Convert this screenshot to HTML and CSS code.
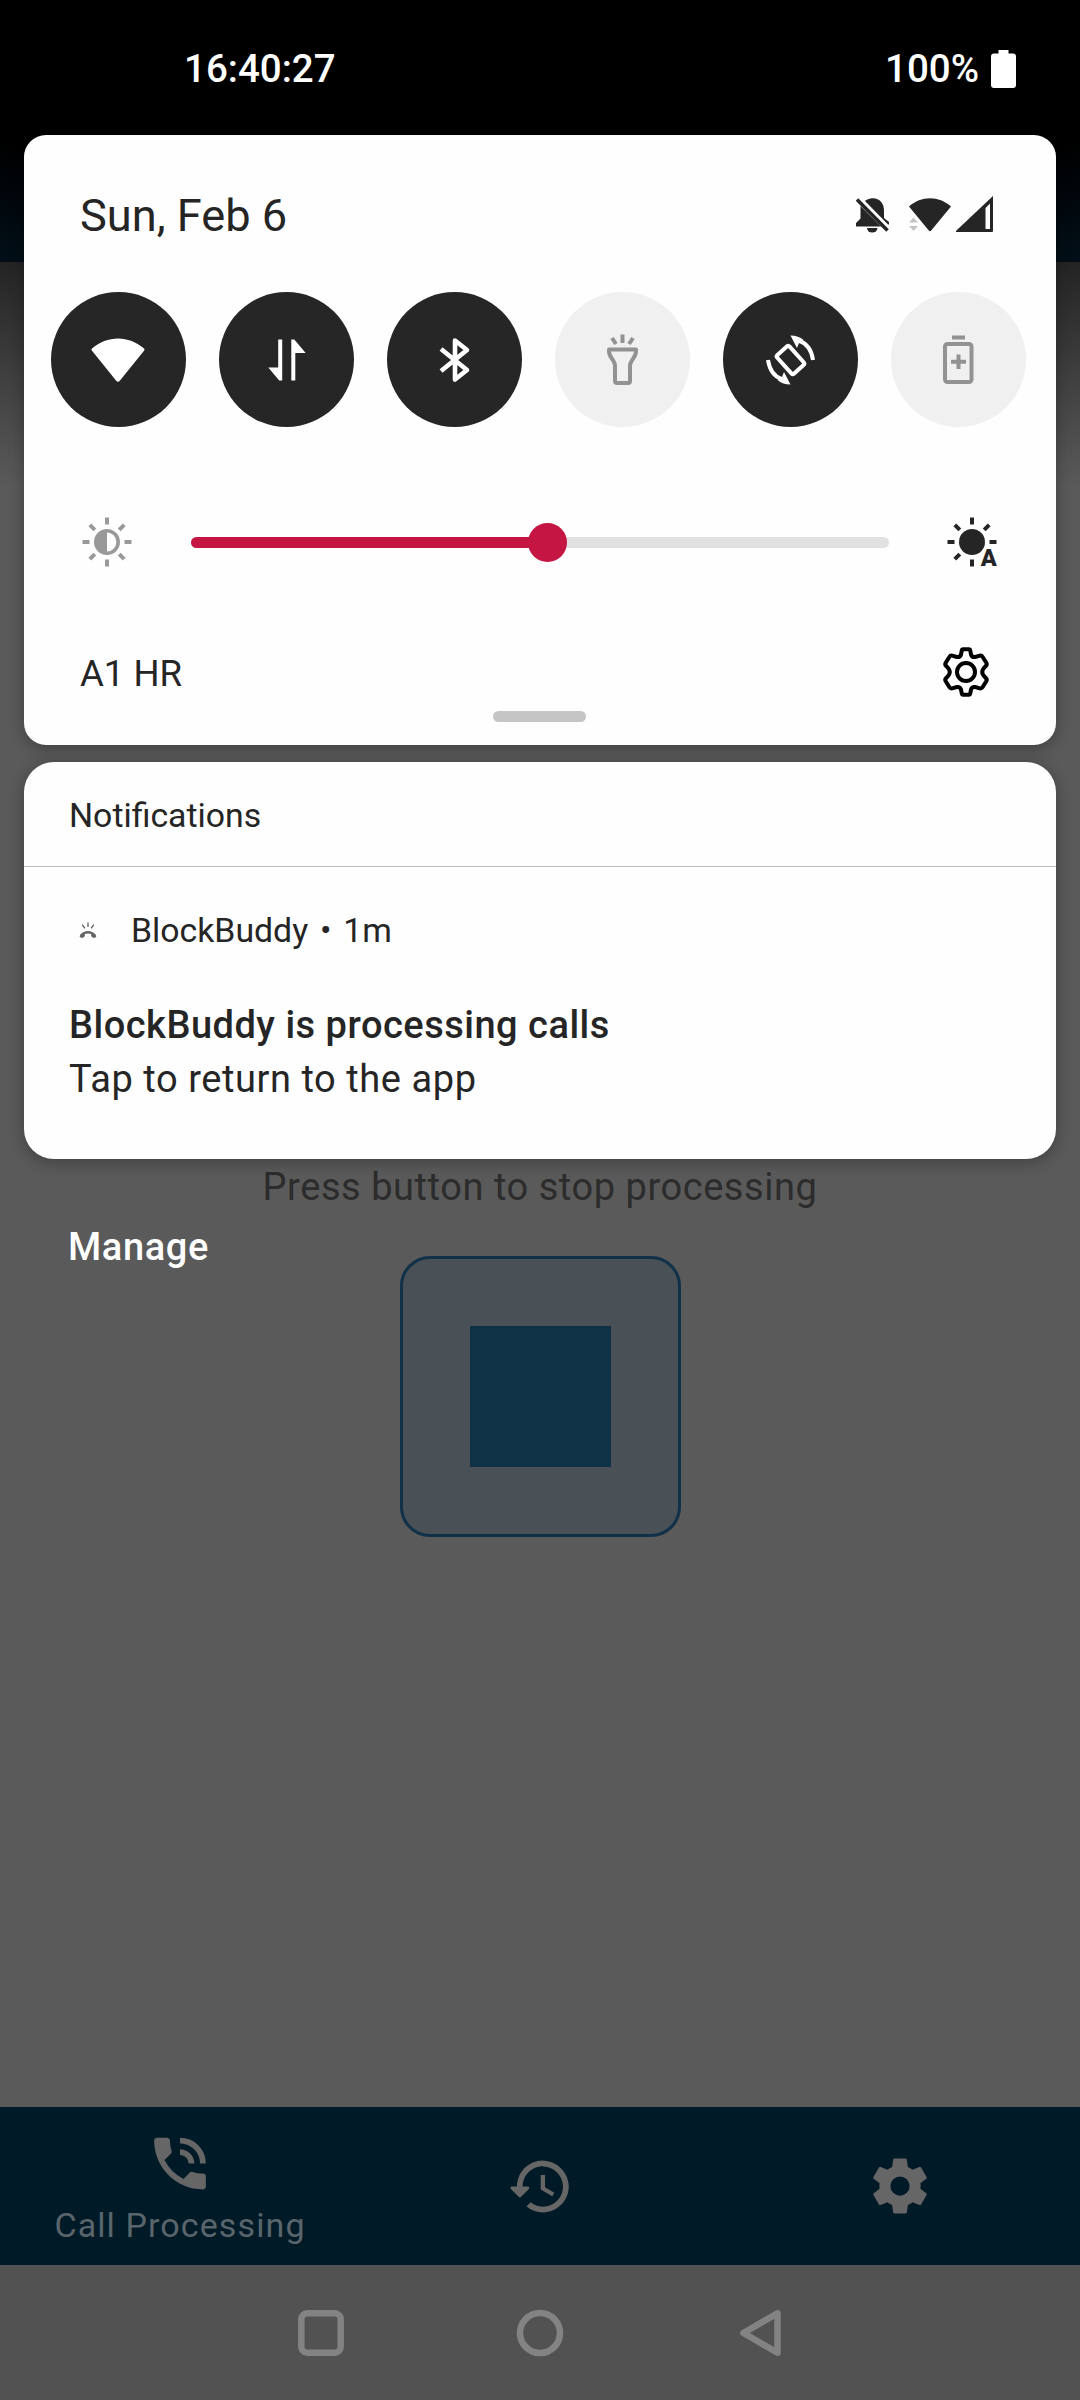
FILE: index.html
```html
<!DOCTYPE html>
<html lang="en">
<head>
<meta charset="utf-8">
<title>Notification shade</title>
<link rel="stylesheet" href="styles.css">
</head>
<body>
<div class="screen">
  <div class="app">
    <div class="toolbar"></div>
    <main class="content">
      <p class="hint">Press button to stop processing</p>
      <div class="stop"><div class="stop-mark"></div></div>
    </main>
    <nav class="tabs">
      <div class="tab">
        <svg class="tab-icon" viewBox="0 0 24 24"><path d="M20 15.5c-1.25 0-2.45-.2-3.57-.57a1.02 1.02 0 0 0-1.02.24l-2.2 2.2a15.045 15.045 0 0 1-6.59-6.59l2.2-2.21a.96.96 0 0 0 .25-1A11.36 11.36 0 0 1 8.5 4c0-.55-.45-1-1-1H4c-.55 0-1 .45-1 1 0 9.39 7.61 17 17 17 .55 0 1-.45 1-1v-3.5c0-.55-.45-1-1-1zM19 12h2a9 9 0 0 0-9-9v2c3.87 0 7 3.13 7 7zm-4 0h2c0-2.76-2.24-5-5-5v2c1.66 0 3 1.34 3 3z"/></svg>
        <span class="tab-label">Call Processing</span>
      </div>
      <div class="tab">
        <svg class="tab-icon" viewBox="0 0 24 24"><path d="M13.26 3C8.17 2.86 4 6.95 4 12H2.21c-.45 0-.67.54-.35.85l2.79 2.8c.2.2.51.2.71 0l2.79-2.8c.31-.31.09-.85-.36-.85H6c0-3.9 3.18-7.05 7.1-7 3.72.05 6.85 3.18 6.9 6.9.05 3.91-3.1 7.1-7 7.1-1.61 0-3.1-.55-4.28-1.48l-1.42 1.44C8.86 20.23 10.85 21 13 21c5.05 0 9.14-4.17 9-9.26-.13-4.69-4.05-8.61-8.74-8.74zM12.25 8v5l4.02 2.4.73-1.2-3.25-1.95V8z"/></svg>
      </div>
      <div class="tab">
        <svg class="tab-icon settings" viewBox="0 0 24 24"><path d="M19.43 12.98c.04-.32.07-.64.07-.98s-.03-.66-.07-.98l2.11-1.65c.19-.15.24-.42.12-.64l-2-3.46c-.12-.22-.39-.3-.61-.22l-2.49 1c-.52-.4-1.08-.73-1.69-.98l-.38-2.65A.488.488 0 0 0 14 2h-4c-.25 0-.46.18-.49.42l-.38 2.65c-.61.25-1.17.59-1.69.98l-2.49-1c-.23-.09-.49 0-.61.22l-2 3.46c-.13.22-.07.49.12.64l2.11 1.65c-.04.32-.07.65-.07.98s.03.66.07.98l-2.11 1.65c-.19.15-.24.42-.12.64l2 3.46c.12.22.39.3.61.22l2.49-1c.52.4 1.08.73 1.69.98l.38 2.65c.03.24.24.42.49.42h4c.25 0 .46-.18.49-.42l.38-2.65c.61-.25 1.17-.59 1.69-.98l2.49 1c.23.09.49 0 .61-.22l2-3.46c.12-.22.07-.49-.12-.64l-2.11-1.65zM12 15.5a3.5 3.5 0 1 1 0-7 3.5 3.5 0 0 1 0 7z"/></svg>
      </div>
    </nav>
    <div class="navbar">
      <svg viewBox="0 0 50 50"><rect x="6.3" y="5.3" width="39.4" height="39.4" rx="6"/></svg>
      <svg viewBox="0 0 50 50"><circle cx="25" cy="25" r="20"/></svg>
      <svg viewBox="0 0 50 50"><path d="M42.500 5.200V44.800L8.500 25Z"/></svg>
    </div>
  </div>

  <div class="shade">
    <header class="status">
      <span class="clock">16:40:27</span>
      <span class="charge">100%</span>
      <svg class="battery" viewBox="0 0 25 38"><path d="M7.500 0h10v3.500H22a3 3 0 0 1 3 3V35a3 3 0 0 1-3 3H3a3 3 0 0 1-3-3V6.500a3 3 0 0 1 3-3h4.500z"/></svg>
    </header>

    <section class="card quick">
      <div class="date-row">
        <span class="date">Sun, Feb 6</span>
        <svg class="indicators" viewBox="0 0 140 40">
          <path d="M10.500 5.500a13 13 0 0 1 5-2c8-1.500 13.500 4 13.500 12v7.500l5 4v2.500h-1L10 6zM5.500 11L26 31.500H1v-3.500l4.500-4.500z"/>
          <path d="M12 33h10.500a5.200 4.500 0 0 1-10.500 0z"/>
          <path class="slash" d="M2 4.500L32.500 35.500"/>
          <path d="M54 11.500c12-11 30-11 42 0L76.200 35.500q-1.200 1.500-2.400 0z"/>
          <path class="faint" d="M54 27.500l4.500-5 4.500 5zM54 31l4.500 5 4.500-5z"/>
          <path fill-rule="evenodd" d="M138 1v35q0 1-1 1h-35q-2 0-.6-1.500zM135 8.500l-4.500 4.500v21h4.500z"/>
        </svg>
      </div>

      <div class="tiles">
        <div class="tile"><svg viewBox="1 0 60 60"><path d="M4 18.500c15-13.500 37-13.500 52 0q1 1 .2 2L32 50.500q-2 2.500-4 0L3.800 20.500q-.8-1 .2-2z"/></svg></div>
        <div class="tile"><svg viewBox="1 0 60 60"><path d="M22.200 9.500h4V50.500h-3L12.300 37.500h9.900zM35.300 50.500V9.500h3L49.700 23H39.300v27.500z"/></svg></div>
        <div class="tile"><svg viewBox="1 0 60 60"><path class="line bold" d="M17 19L43 40 31 49.500V10.500L43 20 17 41"/></svg></div>
        <div class="tile off"><svg viewBox="0.5 0 60 60"><path class="line" d="M16.500 19.500h27v2c0 6-6 9-6 14V51q0 2-2 2h-11q-2 0-2-2V35.500c0-5-6-8-6-14z"/><path class="line" d="M30 4.500v8.500M19.500 8l4 6M40.500 8l-4 6"/></svg></div>
        <div class="tile"><svg viewBox="0.5 0 60 60"><rect class="line" x="21.700" y="17.500" width="16.600" height="25" rx="2" transform="rotate(-42 30 30)"/><path class="line" d="M38 10.500C46 13 51 20 52.500 30M7.500 30C9 40 14 47 22 49.500"/><path d="M30 5.500Q38 5.500 43 10L38.500 13 36.500 18zM30 54.500Q22 54.500 17 50L21.500 47 23.500 42z"/></svg></div>
        <div class="tile off"><svg viewBox="1 0 60 60"><rect class="line" x="17" y="14" width="26.500" height="38" rx="2.500"/><path class="line" d="M24 7.500h13M30.500 24.500v14.500M23 31.800h15"/></svg></div>
      </div>

      <div class="brightness">
        <svg class="sun dim" viewBox="0 0 60 60">
          <circle class="ring" cx="27" cy="30" r="11.200"/><path d="M27 18a12 12 0 0 0 0 24z"/>
          <path class="rays" d="M27 5.500v7M27 47.500v7M2.500 30h7M44.500 30h7M9.800 12.800l5 5M39.200 42.200l5 5M44.200 12.800l-5 5M14.800 42.200l-5 5"/>
        </svg>
        <div class="slider"><div class="level"></div><div class="knob"></div></div>
        <svg class="sun auto" viewBox="0 0 60 60">
          <circle cx="27" cy="30" r="13"/>
          <path class="rays" d="M27 5.500v7M27 47.500v7M2.500 30h7M44.500 30h7M9.800 12.800l5 5M44.200 12.800l-5 5M14.800 42.200l-5 5"/>
          <text x="35.800" y="54" class="auto-letter">A</text>
        </svg>
      </div>

      <div class="footer">
        <span class="carrier">A1 HR</span>
        <svg class="gear" viewBox="0 0 50 50"><circle cx="25" cy="25" r="9"/><path d="M20.800 3.500Q21 2.300 22.200 2.300H27.800Q29 2.300 29.200 3.500L30 7.500Q31 10.500 34.200 10L38 8.800Q40.500 8 41.700 10L45.300 15.700Q46.400 17.500 44.800 19L42.200 22Q40.200 25 42.200 28L44.800 31Q46.400 32.500 45.300 34.300L41.700 40Q40.500 42 38 41.200L34.200 40Q31 39.500 30 42.500L29.200 46.500Q29 47.700 27.800 47.700H22.200Q21 47.700 20.800 46.500L20 42.500Q19 39.500 15.800 40L12 41.200Q9.500 42 8.300 40L4.700 34.300Q3.600 32.500 5.200 31L7.800 28Q9.800 25 7.800 22L5.200 19Q3.600 17.500 4.700 15.700L8.300 10Q9.500 8 12 8.800L15.800 10Q19 10.500 20 7.500Z"/></svg>
      </div>
      <div class="handle"></div>
    </section>

    <section class="card notes">
      <h2 class="notes-title">Notifications</h2>
      <article class="note">
        <div class="note-head">
          <svg class="note-icon" viewBox="0 0 20 18"><path d="M1 16.500C0 14 4 9.500 10 9.500s10 4.500 9 7l-3 .7-2.500-1.700v-2.700q-3.500-1-7 0v2.700L4 17.200z"/><path class="note-rays" d="M10 0v5M3.500 2.500l3 4M16.500 2.500l-3 4"/></svg>
          <span class="app-name">BlockBuddy</span><span class="dot">•</span><span>1m</span>
        </div>
        <h3 class="note-title">BlockBuddy is processing calls</h3>
        <p class="note-text">Tap to return to the app</p>
      </article>
    </section>
    <span class="manage">Manage</span>
  </div>
</div>
</body>
</html>
```
FILE: styles.css
```css
* { box-sizing: border-box; margin: 0; padding: 0; }
body { font-family: Roboto, sans-serif; font-weight: 400; color: #252525; background: #5a5a5a; }
svg { display: block; flex: none; fill: currentColor; }
span, p, h2, h3 { white-space: nowrap; }

.screen { display: grid; width: 1080px; height: 2400px; overflow: hidden; }
.app, .shade { grid-area: 1 / 1; min-width: 0; }

/* dimmed app behind the shade */
.app { display: flex; flex-direction: column; background: #5a5a5a; }
.toolbar { height: 262px; background: linear-gradient(#000 140px, #020f18 262px); }
.content {
  flex: 1; display: flex; flex-direction: column; align-items: center; padding-top: 903px;
  background: linear-gradient(#242424 0, #5a5a5a 225px);
}
.hint { font-size: 38px; line-height: 44px; letter-spacing: 0.55px; color: #2c2c2c; }
.stop {
  display: grid; place-items: center; width: 281px; height: 281px; margin-top: 47px;
  border: 3px solid #113149; border-radius: 30px; background: #495157;
}
.stop-mark { width: 141px; height: 141px; background: #0f3247; }
.tabs { display: grid; grid-template-columns: repeat(3, 1fr); height: 158px; background: #001a27; color: #666; }
.tab { display: flex; flex-direction: column; align-items: center; justify-content: center; }
.tab-icon { width: 70px; height: 69px; }
.tab-icon.settings { width: 66px; height: 66px; }
.tab-label { font-size: 34px; line-height: 40px; letter-spacing: 1.1px; margin: 7px 0 -1px; color: #5a656b; }
.navbar { display: flex; justify-content: center; gap: 170px; height: 135px; padding-top: 43px; background: #525252; color: #838383; }
.navbar svg { width: 50px; height: 50px; fill: none; stroke: currentColor; stroke-width: 6.500; stroke-linejoin: round; }

.shade { display: flex; flex-direction: column; padding: 0 24px; z-index: 1; }
.status { display: flex; align-items: center; height: 135px; padding: 2px 40px 0 160px; color: #fff; font-size: 38.500px; font-weight: 500; }
.charge { margin-left: auto; margin-right: 12px; }
.battery { width: 25px; height: 38px; }

.card { background: #fefefe; box-shadow: 0 3px 16px rgba(0, 0, 0, .3); }
.quick { display: flex; flex-direction: column; height: 610px; border-radius: 22px; }
.date-row { display: flex; align-items: center; justify-content: space-between; height: 60px; margin-top: 50px; padding: 0 61px 0 56px; }
.date { padding-top: 1px; font-size: 45.200px; }
.indicators { width: 140px; height: 40px; }
.slash { fill: none; stroke: currentColor; stroke-width: 3.500; }
.faint { fill: #c4c4c4; }

.tiles { display: flex; justify-content: space-between; margin-top: 47px; padding: 0 30px 0 27px; }
.tile { display: grid; place-items: center; width: 135px; height: 135px; border-radius: 50%; background: #262626; color: #fff; }
.tile.off { background: #f0f0f0; color: #929292; }
.tile svg { width: 60px; height: 60px; }
.line { fill: none; stroke: currentColor; stroke-width: 4; stroke-linejoin: round; }
.line.bold { stroke-width: 4.600; }

.brightness { display: flex; align-items: center; height: 60px; margin-top: 85px; padding: 0 51px 0 56px; }
.sun { width: 60px; height: 60px; }
.sun.dim { color: #999; }
.ring { fill: none; stroke: currentColor; stroke-width: 3.600; }
.rays { fill: none; stroke: currentColor; stroke-width: 4; }
.auto-letter { font-size: 23.500px; font-weight: 900; }
.slider { display: flex; align-items: center; width: 698px; height: 11px; margin-left: 51px; margin-right: 56px; border-radius: 6px; background: #e1e1e1; }
.level { width: 350px; height: 11px; border-radius: 6px; background: #c51542; }
.knob { flex: none; width: 39px; height: 39px; margin-left: -13px; border-radius: 50%; background: #c51542; }

.footer { display: flex; align-items: center; justify-content: space-between; height: 60px; margin-top: 70px; padding: 0 65px 0 56px; }
.carrier { padding-top: 3px; font-size: 36.600px; }
.gear { width: 50px; height: 50px; fill: none; stroke: #000; stroke-width: 4; }
.handle { width: 93px; height: 11px; margin: 9px 0 0 469px; border-radius: 6px; background: #c5c5c5; }

.notes { height: 397px; margin-top: 17px; border-radius: 30px; }
.notes-title { height: 105px; padding-left: 45px; border-bottom: 1px solid #bcbcbc; font-size: 33.800px; line-height: 107px; font-weight: 400; }
.note { padding: 43px 45px 0; }
.note-head { display: flex; align-items: center; height: 40px; font-size: 33.800px; }
.note-icon { width: 18px; height: 17px; margin: 0 34px 0 10px; color: #666; }
.note-rays { fill: none; stroke: currentColor; stroke-width: 1.500; }
.dot { width: 35px; text-align: center; font-size: 34px; }
.note-title { margin-top: 50px; font-size: 38px; line-height: 50px; font-weight: 500; letter-spacing: 0.5px; }
.note-text { margin-top: 5px; font-size: 38px; line-height: 48px; letter-spacing: 0.57px; }
.manage { margin: 66px 0 0 44px; font-size: 38px; line-height: 44px; font-weight: 500; letter-spacing: 0.6px; color: #fff; }
```
